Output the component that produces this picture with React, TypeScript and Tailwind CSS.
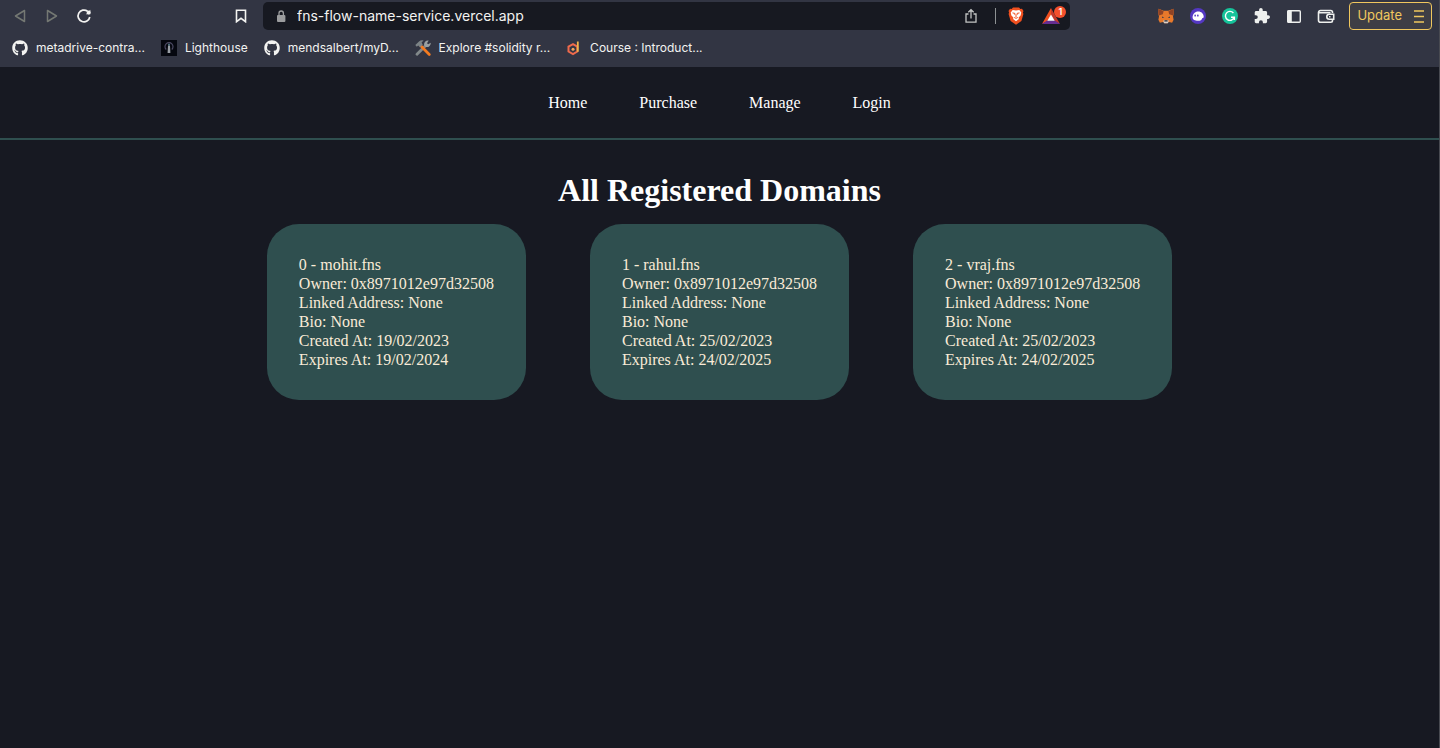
import { ReactNode } from 'react'
import { FaGithub } from 'react-icons/fa'

const extensions = [
  { label: 'MetaMask', icon: <FoxIcon /> },
  { label: 'Phantom', icon: <PhantomIcon /> },
  { label: 'Grammarly', icon: <GrammarlyIcon /> },
  { label: 'Extensions', icon: <PuzzleIcon /> },
  { label: 'Sidebar', icon: <SidebarIcon /> },
  { label: 'Wallet', icon: <WalletIcon /> },
]

const bookmarks = [
  { label: 'metadrive-contra...', icon: <FaGithub size={16} /> },
  { label: 'Lighthouse', icon: <LighthouseIcon /> },
  { label: 'mendsalbert/myD...', icon: <FaGithub size={16} /> },
  { label: 'Explore #solidity r...', icon: <ToolsIcon /> },
  { label: 'Course : Introduct...', icon: <CourseIcon /> },
]

const navLinks = ['Home', 'Purchase', 'Manage', 'Login']

const domains = [
  { id: 0, name: 'mohit.fns', owner: '0x8971012e97d32508', createdAt: '19/02/2023', expiresAt: '19/02/2024' },
  { id: 1, name: 'rahul.fns', owner: '0x8971012e97d32508', createdAt: '25/02/2023', expiresAt: '24/02/2025' },
  { id: 2, name: 'vraj.fns', owner: '0x8971012e97d32508', createdAt: '25/02/2023', expiresAt: '24/02/2025' },
]

function FoxIcon() {
  return (
    <svg width="16" height="16" viewBox="0 0 16 16">
      <path d="M.6.8 5.600 2.800h4.800L15.400.8l.4 4.400-.8 3.400.6 3.200-1.500 3-3.200-.7-1.600 1.200H6.700l-1.600-1.200-3.200.7-1.500-3 .6-3.200L.2 5.200z" fill="#e8792b" />
      <path d="M.6.8 5.600 3.200 4.800 6.200.9 7.600.2 5.200zM15.400.8l-5 2.400.8 3 3.900 1.400.7-2.400z" fill="#8f4326" />
      <path d="m4 8.600 2.200 1-2 .5zM12 8.600l-2.200 1 2 .5z" fill="#2c3850" />
      <path d="m5.200 12.800 1.400-.8h2.800l1.400.8-.9 2.500H6.100z" fill="#d9cfc7" />
      <path d="M6.500 12.200h3l.2 1.300H6.300z" fill="#23232e" />
    </svg>
  )
}

function PhantomIcon() {
  return (
    <svg width="16" height="16" viewBox="0 0 16 16">
      <circle cx="8" cy="8" r="8" fill="#5438c2" />
      <path d="M2.600 9.600C2.600 5.800 5 3.400 8.200 3.400c3.200 0 5.300 2.300 5.500 5 .1 1.300-.5 1.500-1.300 1.500-.5 1.900-2.100 2.900-4.400 2.900-3 0-5.400-.9-5.400-3.200z" fill="#fff" />
      <rect x="4.400" y="6.400" width="1.500" height="2.200" rx=".7" fill="#5438c2" />
      <rect x="7.100" y="6.400" width="1.500" height="2.200" rx=".7" fill="#5438c2" />
    </svg>
  )
}

function GrammarlyIcon() {
  return (
    <svg width="16" height="16" viewBox="0 0 16 16" fill="none">
      <circle cx="8" cy="8" r="8" fill="#16c39a" />
      <path d="M11.400 5A4.500 4.500 0 1 0 12 9.800M12.400 12V9.200H9" stroke="#fff" strokeWidth="1.400" />
    </svg>
  )
}

function PuzzleIcon() {
  return (
    <svg width="16" height="16" viewBox="1 1 22 22" fill="#eef0ee">
      <path d="M20.500 11H19V7c0-1.100-.9-2-2-2h-4V3.500a2.500 2.500 0 0 0-5 0V5H4c-1.100 0-2 .9-2 2v3.800h1.500a2.700 2.700 0 0 1 0 5.400H2V20c0 1.100.9 2 2 2h3.800v-1.500a2.700 2.700 0 0 1 5.400 0V22H17c1.100 0 2-.9 2-2v-4h1.500a2.500 2.500 0 0 0 0-5z" />
    </svg>
  )
}

function SidebarIcon() {
  return (
    <svg width="16" height="16" viewBox="0 0 16 16">
      <rect x="1.700" y="2.700" width="12.600" height="11.600" rx="1" fill="none" stroke="#eef0ee" strokeWidth="1.400" />
      <path d="M1.500 2.500h4.300v12H1.500z" fill="#eef0ee" />
    </svg>
  )
}

function WalletIcon() {
  return (
    <svg width="18" height="16" viewBox="0 0 18 16" fill="none" stroke="#eef0ee" strokeWidth="1.600">
      <path d="M15.500 5V4.200A1.700 1.700 0 0 0 13.800 2.500H3.500A2 2 0 0 0 1.500 4.500v7.800a2 2 0 0 0 2 2h10.300a1.700 1.700 0 0 0 1.700-1.700v-.8M1.500 4.700h12" />
      <path d="M16.700 6.200v5h-4.400a2.500 2.500 0 0 1 0-5z" />
      <path d="M12 8.700h1.500" />
    </svg>
  )
}

function LighthouseIcon() {
  return (
    <svg width="16" height="16" viewBox="0 0 16 16">
      <path d="M0 0h16v16H0z" fill="#05070f" />
      <path d="M5.200 9.500a4 4 0 1 1 5.600 0" fill="none" stroke="#4c4a63" strokeWidth="1.200" />
      <path d="M7 5.500h2l.4 7.500H6.600z" fill="#9a9fa6" />
      <path d="M7.200 3.800h1.600v1.700H7.200z" fill="#5c8794" />
    </svg>
  )
}

function ToolsIcon() {
  return (
    <svg width="16" height="16" viewBox="0 0 16 16" fill="none">
      <path d="M2 14.300 11.200 5" stroke="#82898b" strokeWidth="2.800" strokeLinecap="round" />
      <path d="m15.700 2.800-2.500 1.500-1.200-1.100L13.700.5a3.800 3.800 0 0 0-4.400 4.900l1.600 1.500a3.800 3.800 0 0 0 4.800-4.100z" fill="#9aa0a1" />
      <path d="m6 6 8.300 8.500" stroke="#f47b20" strokeWidth="2.700" strokeLinecap="round" />
      <path d="M.3 5 4 1.400C5.500.2 7.400.1 8.600.8L6.600 2.300l1.100 2.400L5 7.200 3.200 5.600l-1.400 1.100z" fill="#7c8386" />
    </svg>
  )
}

function CourseIcon() {
  return (
    <svg width="16" height="16" viewBox="0 0 16 16" fill="none">
      <path d="M7 4.200 11.300 6.500v5L7 14.200l-4.500-2.700v-5z" stroke="#ef6a4c" strokeWidth="2" />
      <path d="M11.800 1.500v10.200" stroke="#f1b54a" strokeWidth="1.800" />
      <circle cx="7" cy="9.200" r="1.500" fill="#f3a55d" />
    </svg>
  )
}

function BraveIcon() {
  return (
    <svg width="16" height="18" viewBox="0 0 16 18">
      <path d="M5 .5h6l1.400 1.500 1.600-.2L15.500 4l-.6 1.500.5 1.600-2 7L8 17.800l-5.400-3.700-2-7 .5-1.600L.5 4 2 1.800l1.600.2z" fill="#f0501f" />
      <path d="m8 3.500 3.300-.6 2 2.600-.7 3-2 2 .3 1.500L8 14.200 5.100 12l.3-1.500-2-2-.7-3 2-2.600z" fill="#fff" />
      <path d="m4.500 5.900 2.400.5-.5 1.200M11.500 5.900l-2.400.5.500 1.200M8 7v3M6.200 10.500 8 11.300l1.800-.8" fill="none" stroke="#f0501f" strokeWidth="1" />
    </svg>
  )
}

function RewardsIcon() {
  return (
    <svg width="18" height="16" viewBox="0 0 18 16">
      <path d="M9 0 0 16l9-5z" fill="#f0501f" />
      <path d="m9 0 9 16-9-5z" fill="#c43a2b" />
      <path d="M0 16h18l-5-3.500H5z" fill="#662d91" />
      <path d="m9 6.500 3.700 6.200H5.300z" fill="#fff" />
    </svg>
  )
}

function IconButton({ label, children }: { label: string; children: ReactNode }) {
  return (
    <button aria-label={label} className="flex h-6 w-8 items-center justify-center">
      {children}
    </button>
  )
}

function AddressBar() {
  return (
    <div className="flex h-7 min-w-0 flex-1 items-center rounded-[5px] bg-[#171921] pl-3 pr-1">
      <svg width="12" height="12" viewBox="0 0 12 12" className="shrink-0">
        <rect x="2" y="5" width="8.400" height="7" rx="1" fill="#9b9c9e" />
        <path d="M4 5.500V3.200a2.200 2.200 0 0 1 4.400 0v2.300" fill="none" stroke="#9b9c9e" strokeWidth="1.300" />
      </svg>
      <input
        aria-label="Address"
        defaultValue="fns-flow-name-service.vercel.app"
        className="ml-[10px] min-w-0 flex-1 bg-transparent text-sm text-[#f3f3f1] outline-none"
      />
      <IconButton label="Share">
        <svg width="14" height="16" viewBox="0 0 14 16" fill="none" stroke="#c3c5c4" strokeWidth="1.300">
          <path d="M4.500 6H2v8.200h10V6H9.500M7 10.500V1.800M4.300 4.300 7 1.700l2.700 2.600" />
        </svg>
      </IconButton>
      <span className="ml-2 h-4 w-px bg-[#8d9193]" />
      <button aria-label="Brave Shields" className="ml-3">
        <BraveIcon />
      </button>
      <button aria-label="Brave Rewards" className="relative ml-4 h-6 w-[26px]">
        <span className="flex h-6 w-[22px] items-center pl-[2px]">
          <RewardsIcon />
        </span>
        <span className="absolute right-0 top-[2px] flex size-3 items-center justify-center rounded-full bg-[#f4502c] text-[9px] font-semibold leading-3 text-white">
          1
        </span>
      </button>
    </div>
  )
}

function BrowserBar() {
  return (
    <header className="h-[67px] bg-[#323543] font-['Inter',sans-serif] text-[#f3f3f1]">
      <div className="flex h-8 items-center pl-1 pr-[7px]">
        <IconButton label="Back">
          <svg width="12" height="14" viewBox="0 0 12 14" fill="none" stroke="#747873" strokeWidth="1.500" strokeLinejoin="round">
            <path d="M10.500 1.500v11L1.500 7z" />
          </svg>
        </IconButton>
        <IconButton label="Forward">
          <svg width="12" height="14" viewBox="0 0 12 14" fill="none" stroke="#747873" strokeWidth="1.500" strokeLinejoin="round">
            <path d="M1.500 1.500v11l9-5.500z" />
          </svg>
        </IconButton>
        <IconButton label="Reload">
          <svg width="16" height="16" viewBox="0 0 16 16" fill="none" stroke="#f3f3f1" strokeWidth="1.700">
            <path d="M11.500 3.200A5.900 5.900 0 1 0 13.800 9" />
            <path d="M14.300 1.800v4.500H9.800z" fill="#f3f3f1" stroke="none" />
            <circle cx="12.700" cy="4.500" r="1.900" fill="#f3f3f1" stroke="none" />
          </svg>
        </IconButton>
        <span className="w-[125px]" />
        <IconButton label="Bookmark this tab">
          <svg width="12" height="14" viewBox="0 0 12 14" fill="none" stroke="#f3f3f1" strokeWidth="1.600">
            <path d="M1.500 1.200h9v11.500L6 9.300l-4.500 3.400z" />
          </svg>
        </IconButton>
        <span className="w-[6px]" />
        <AddressBar />
        <div className="ml-20 flex">
          {extensions.map((item) => (
            <IconButton key={item.label} label={item.label}>
              {item.icon}
            </IconButton>
          ))}
        </div>
        <button className="ml-[7px] flex h-7 items-center rounded border border-[#f0c75e] bg-[#3e3e45] px-[7px] text-[13px] text-[#f0c75e]">
          Update
          <svg width="10" height="13" viewBox="0 0 10 13" className="ml-3" stroke="#f0c75e" strokeWidth="1.400">
            <path d="M0 1h10M0 6.500h10M0 12h10" />
          </svg>
        </button>
      </div>
      <nav className="flex h-8 items-center gap-4 pl-3">
        {bookmarks.map((item) => (
          <a key={item.label} href="#" className="flex items-center gap-2 text-xs">
            {item.icon}
            {item.label}
          </a>
        ))}
      </nav>
    </header>
  )
}

export default function App() {
  return (
    <div className="flex min-h-screen flex-col border-r border-[#484a51] bg-[#171922] font-['Liberation_Serif','Times_New_Roman',serif] text-base">
      <BrowserBar />
      <nav className="flex h-[73px] items-center justify-center gap-[52px] border-b-2 border-[#2f4f4f] text-white">
        {navLinks.map((link) => (
          <a key={link} href="#">
            {link}
          </a>
        ))}
      </nav>
      <main className="flex flex-1 flex-col items-center pt-8">
        <h1 className="text-[32px] font-bold leading-9 text-white">All Registered Domains</h1>
        <div className="mt-4 flex flex-wrap justify-center gap-16">
          {domains.map((domain) => (
            <div key={domain.id} className="rounded-[32px] bg-[#2f4f4f] px-8 py-[31px] leading-[19px] text-[#faebd7]">
              <p>{domain.id} - {domain.name}</p>
              <p>Owner: {domain.owner}</p>
              <p>Linked Address: None</p>
              <p>Bio: None</p>
              <p>Created At: {domain.createdAt}</p>
              <p>Expires At: {domain.expiresAt}</p>
            </div>
          ))}
        </div>
      </main>
    </div>
  )
}
